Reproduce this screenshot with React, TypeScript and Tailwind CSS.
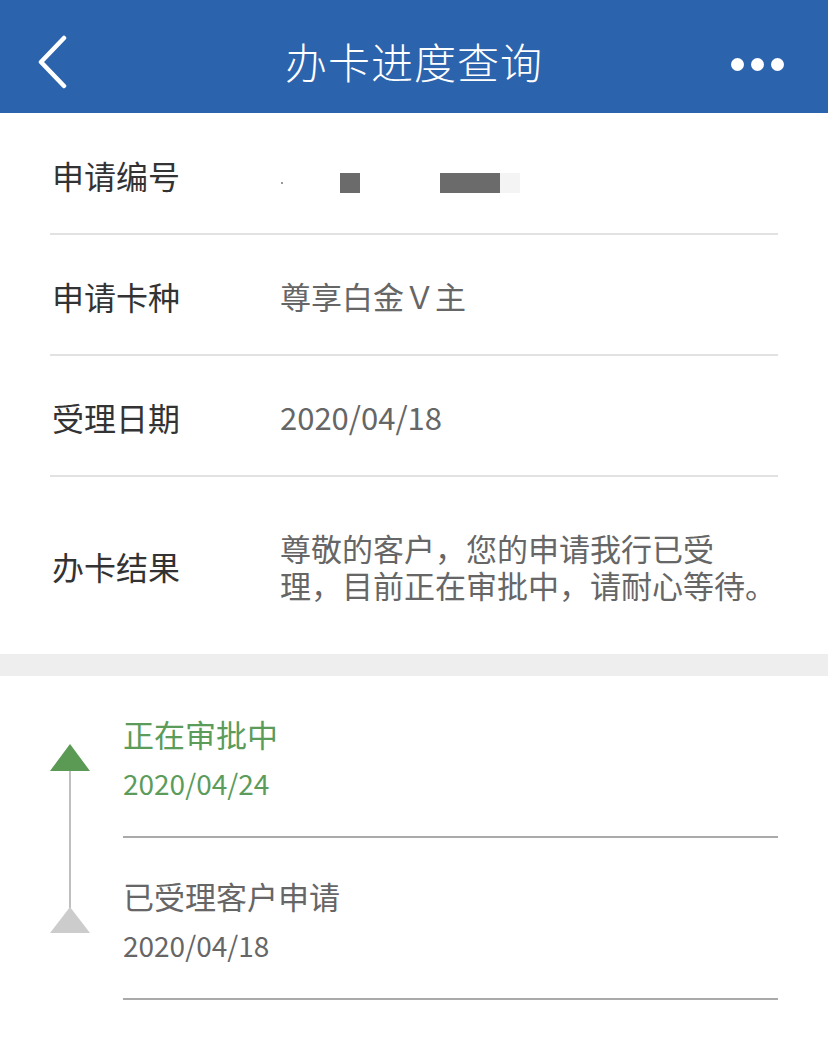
import React from "react";

const rows = [
  { label: "申请卡种", value: "尊享白金Ｖ主" },
  { label: "受理日期", value: "2020/04/18" },
];

const App = () => {
  return (
    <div
      className="w-[828px] min-h-[1038px] bg-white"
      style={{ fontFamily: '"Noto Sans CJK SC", "Noto Sans", sans-serif' }}
    >
      {/* header */}
      <div className="h-[113px] bg-[#2c63ad] flex items-center px-[36px]">
        <div className="w-[100px] pt-[10px]">
          <svg width="32" height="54" viewBox="0 0 32 54">
            <path d="M28 3 L5 27 L28 51" fill="none" stroke="white" strokeWidth="4.5" strokeLinecap="round" strokeLinejoin="round" />
          </svg>
        </div>
        <div className="flex-1 text-center text-white text-[42px] font-light leading-none tracking-[1px] pt-[8px]">
          办卡进度查询
        </div>
        <div className="w-[100px] flex justify-end gap-[7px] pr-[8px] pt-[16px]">
          <span className="w-[13px] h-[13px] rounded-full bg-white" />
          <span className="w-[13px] h-[13px] rounded-full bg-white" />
          <span className="w-[13px] h-[13px] rounded-full bg-white" />
        </div>
      </div>

      {/* info rows */}
      <div className="mx-[50px]">
        <div className="h-[122px] flex items-center border-b-2 border-[#e2e2e2] pt-[4px]">
          <div className="w-[230px] pl-[2px] text-[32px] text-[#333]">申请编号</div>
          <div className="flex items-center h-[20px] mt-[16px]">
            <span className="w-[2px] h-[2px] bg-[#999] ml-[1px]" />
            <span className="w-[20px] h-[20px] bg-[#6b6b6b] ml-[57px]" />
            <span className="w-[60px] h-[20px] bg-[#6b6b6b] ml-[80px]" />
            <span className="w-[20px] h-[20px] bg-[#f4f4f4]" />
          </div>
        </div>
        {rows.map((r) => (
          <div key={r.label} className="h-[121px] flex items-center border-b-2 border-[#e2e2e2] pt-[3px]">
            <div className="w-[230px] pl-[2px] text-[32px] text-[#333]">{r.label}</div>
            <div className="text-[31px] text-[#666]">{r.value}</div>
          </div>
        ))}
        <div className="h-[177px] flex items-center">
          <div className="w-[230px] pl-[2px] text-[32px] text-[#333]">办卡结果</div>
          <div className="text-[31px] leading-[37px] text-[#666]">
            <div>尊敬的客户，您的申请我行已受</div>
            <div>理，目前正在审批中，请耐心等待。</div>
          </div>
        </div>
      </div>

      <div className="h-[22px] bg-[#eeeeee]" />

      {/* timeline */}
      <div className="flex">
        <div className="w-[123px] pl-[50px] pt-[68px]">
          <svg width="40" height="190" viewBox="0 0 40 190">
            <line x1="20" y1="26" x2="20" y2="164" stroke="#aaaaaa" strokeWidth="1.5" />
            <polygon points="20,0 0,27 40,27" fill="#5a9a55" />
            <polygon points="20,163 0,189 40,189" fill="#cccccc" />
          </svg>
        </div>
        <div className="flex-1 mr-[50px]">
          <div className="pt-[38px] pb-[35px] border-b-2 border-[#aaaaaa]">
            <div className="text-[31px] leading-[40px] text-[#5b9c5b]">正在审批中</div>
            <div className="mt-[11px] text-[28px] leading-[36px] text-[#5b9c5b]">2020/04/24</div>
          </div>
          <div className="pt-[38px] pb-[35px] border-b-2 border-[#aaaaaa]">
            <div className="text-[31px] leading-[40px] text-[#666]">已受理客户申请</div>
            <div className="mt-[11px] text-[28px] leading-[36px] text-[#666]">2020/04/18</div>
          </div>
        </div>
      </div>
    </div>
  );
};

export default App;
